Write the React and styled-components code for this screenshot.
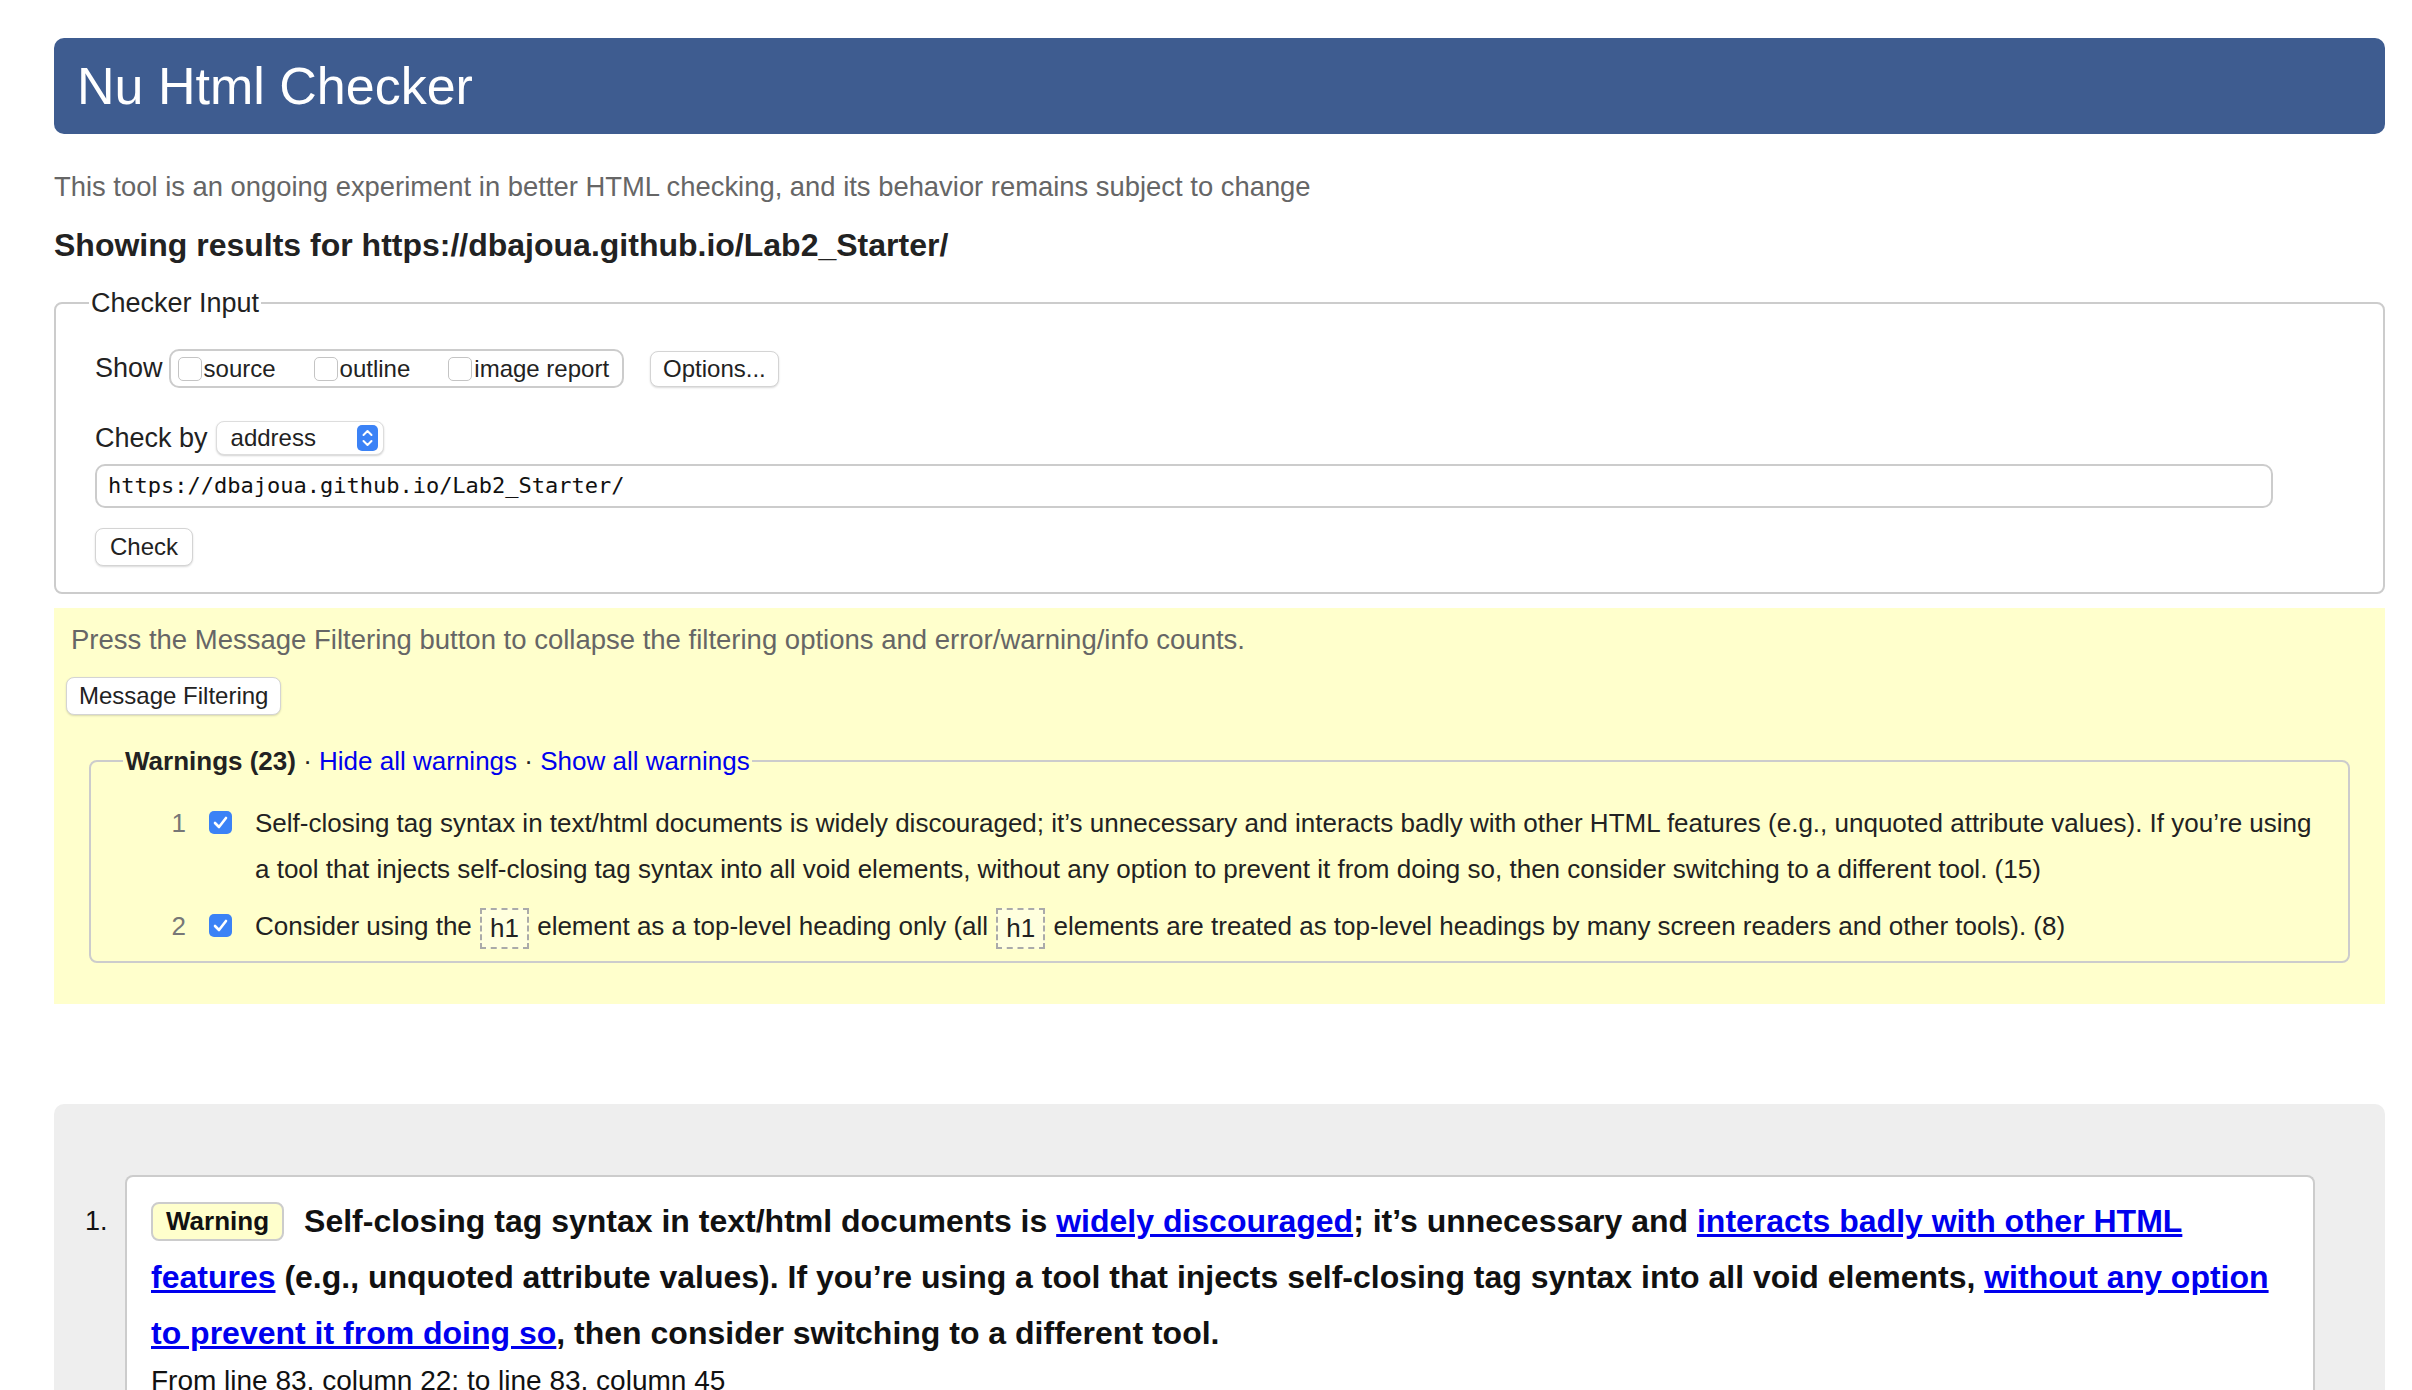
import React from 'react';
import styled, { createGlobalStyle } from 'styled-components';

const GlobalStyle = createGlobalStyle`
  html, body {
    margin: 0;
    padding: 0;
    background: #fff;
    overflow: hidden;
  }
  body {
    font-family: "Liberation Sans", Arial, Helvetica, sans-serif;
    color: #222;
  }
  * {
    box-sizing: border-box;
  }
`;

const Page = styled.div`
  padding: 38px 27px 0 54px;
`;

const Title = styled.h1`
  margin: 0;
  height: 96px;
  padding: 0 23px;
  background: #3e5c90;
  color: #fff;
  border-radius: 10px;
  font-size: 52px;
  font-weight: normal;
  line-height: 96px;
`;

const Intro = styled.p`
  margin: 35px 0 0;
  font-size: 27.4px;
  line-height: 36px;
  color: #666;
`;

const ResultsFor = styled.h2`
  margin: 20px 0 0;
  font-size: 32px;
  line-height: 40px;
  font-weight: bold;
  color: #222;
`;

const Fieldset = styled.fieldset`
  margin: 20px 0 0;
  padding: 0 24px 26px 39px;
  border: 2px solid #ccc;
  border-radius: 8px;
  min-width: 0;
`;

const Legend = styled.legend`
  font-size: 27px;
  line-height: 36px;
  padding: 0 2px;
  margin-left: -6px;
  color: #222;
`;

const Row = styled.div`
  display: flex;
  align-items: center;
  height: ${p => p.h}px;
  margin-top: ${p => p.top}px;
`;

const Label = styled.span`
  font-size: 27px;
  margin-right: ${p => p.gap || 6}px;
`;

const Group = styled.div`
  display: flex;
  align-items: center;
  gap: 38px;
  height: 39px;
  border: 2px solid #ccc;
  border-radius: 10px;
  padding: 0 13px 0 7px;
`;

const Option = styled.label`
  display: flex;
  align-items: center;
  gap: 2px;
  font-size: 24px;
  color: #222;
`;

const Box = styled.span`
  width: 24px;
  height: 24px;
  border: 1px solid #c4c4c4;
  border-radius: 5px;
  background: #fff;
`;

const Button = styled.button`
  height: ${p => p.h || 36}px;
  margin-left: ${p => p.left || 0}px;
  padding: 0 ${p => p.pad || 14}px;
  background: #fff;
  border: 1px solid #d4d4d4;
  border-radius: 8px;
  box-shadow: 0 1px 2px rgba(0, 0, 0, 0.15);
  font-family: "Liberation Sans", Arial, sans-serif;
  font-size: 24px;
  color: #222;
`;

const Select = styled.div`
  display: flex;
  align-items: center;
  justify-content: space-between;
  width: 168px;
  height: 34px;
  padding: 0 5px 0 14px;
  background: #fff;
  border: 1px solid #ddd;
  border-radius: 8px;
  box-shadow: 0 1px 2px rgba(0, 0, 0, 0.18);
  font-size: 24px;
  color: #222;
`;

const UrlInput = styled.div`
  width: 2178px;
  height: 44px;
  margin-top: 9px;
  padding: 0 11px;
  border: 2px solid #ccc;
  border-radius: 10px;
  font-family: "DejaVu Sans Mono", "Liberation Mono", monospace;
  font-size: 22px;
  line-height: 40px;
  color: #111;
`;

const CheckRow = styled.div`
  margin-top: 20px;
`;

const Filters = styled.section`
  margin-top: 14px;
  padding: 14px 17px 41px;
  background: #ffffcc;
`;

const Hint = styled.p`
  margin: 0;
  font-size: 27.5px;
  line-height: 36px;
  color: #666;
`;

const FilterButton = styled(Button)`
  display: block;
  margin: 19px 0 0 -5px;
`;

const WarnSet = styled.fieldset`
  margin: 28px 18px 0;
  padding: 0 28px 12px 35px;
  border: 2px solid #ccc;
  border-radius: 8px;
  min-width: 0;
`;

const WarnLegend = styled.legend`
  font-size: 26px;
  line-height: 36px;
  padding: 0 2px;
  margin-left: -3px;
  color: #222;

  b {
    font-weight: bold;
  }
`;

const A = styled.a`
  color: #0000ee;
  text-decoration: ${p => (p.under ? 'underline' : 'none')};
`;

const WarnList = styled.ol`
  margin: 21px 0 0;
  padding: 0;
  list-style: none;
`;

const WarnRow = styled.li`
  display: flex;
  align-items: flex-start;
  font-size: 26px;
  line-height: 46px;
  color: #222;

  & + & {
    margin-top: 11px;
  }
`;

const WarnNum = styled.span`
  flex-shrink: 0;
  width: 60px;
  text-align: right;
  color: #777;
`;

const Tick = styled.span`
  flex-shrink: 0;
  display: flex;
  align-items: center;
  justify-content: center;
  width: 23px;
  height: 23px;
  margin: 11px 23px 0;
  border-radius: 5px;
  background: #3b82f6;
`;

const WarnText = styled.span`
  flex: 1;
`;

const Code = styled.span`
  display: inline-block;
  vertical-align: middle;
  margin: 0 1px;
  padding: 0 8px;
  line-height: 37px;
  border: 2px dashed #aaa;
  background: rgba(255, 255, 255, 0.35);
`;

const Results = styled.section`
  margin-top: 100px;
  padding: 71px 70px 0 0;
  background: #eeeeee;
  border-radius: 10px 10px 0 0;
`;

const ResultItem = styled.div`
  display: flex;
  align-items: flex-start;
`;

const ResultNum = styled.span`
  flex-shrink: 0;
  width: 71px;
  padding: 28px 0 0 31px;
  font-size: 27px;
  line-height: 36px;
  color: #111;
`;

const Card = styled.div`
  flex: 1;
  background: #fff;
  border: 2px solid #ccc;
  border-bottom: none;
  border-radius: 8px 8px 0 0;
  padding: 16px 28px 60px 24px;
`;

const Message = styled.p`
  margin: 0;
  font-size: 32px;
  line-height: 56px;
  font-weight: bold;
  color: #111;
`;

const Badge = styled.span`
  display: inline-block;
  vertical-align: 2px;
  margin-right: 20px;
  padding: 0 13px;
  background: #ffffcc;
  border: 2px solid #ccc;
  border-radius: 8px;
  font-size: 26px;
  line-height: 35px;
  color: #111;
`;

const Location = styled.p`
  margin: 2px 0 0;
  font-size: 28px;
  line-height: 36px;
  color: #111;
`;

const Extract = styled.pre`
  margin: 14px 0 0;
  font-family: "DejaVu Sans Mono", "Liberation Mono", monospace;
  font-size: 22px;
  line-height: 34px;
  color: #222;
`;

const CheckMark = () => (
  <svg width="15" height="13" viewBox="0 0 15 13">
    <path d="M2 7 L6 11 L13 2" fill="none" stroke="#fff" strokeWidth="2.6" strokeLinecap="round" strokeLinejoin="round" />
  </svg>
);

const SelectArrows = () => (
  <svg width="21" height="26" viewBox="0 0 21 26">
    <rect x="0" y="0" width="21" height="26" rx="5" fill="#3b82f6" />
    <path d="M6.5 10 L10.5 6 L14.5 10" fill="none" stroke="#fff" strokeWidth="2" strokeLinecap="round" strokeLinejoin="round" />
    <path d="M6.5 16 L10.5 20 L14.5 16" fill="none" stroke="#fff" strokeWidth="2" strokeLinecap="round" strokeLinejoin="round" />
  </svg>
);

const showOptions = ['source', 'outline', 'image report'];

export default function App() {
  return (
    <>
      <GlobalStyle />
      <Page>
        <Title>Nu Html Checker</Title>
        <Intro>This tool is an ongoing experiment in better HTML checking, and its behavior remains subject to change</Intro>
        <ResultsFor>Showing results for https://dbajoua.github.io/Lab2_Starter/</ResultsFor>

        <Fieldset>
          <Legend>Checker Input</Legend>
          <Row h={39} top={28}>
            <Label>Show</Label>
            <Group>
              {showOptions.map(name => (
                <Option key={name}>
                  <Box />
                  {name}
                </Option>
              ))}
            </Group>
            <Button left={26} pad={12}>Options...</Button>
          </Row>
          <Row h={34} top={33}>
            <Label gap={8}>Check by</Label>
            <Select>
              address
              <SelectArrows />
            </Select>
          </Row>
          <UrlInput>https://dbajoua.github.io/Lab2_Starter/</UrlInput>
          <CheckRow>
            <Button h={38}>Check</Button>
          </CheckRow>
        </Fieldset>

        <Filters>
          <Hint>Press the Message Filtering button to collapse the filtering options and error/warning/info counts.</Hint>
          <FilterButton h={38} pad={12}>Message Filtering</FilterButton>
          <WarnSet>
            <WarnLegend>
              <b>Warnings (23)</b> · <A href="#">Hide all warnings</A> · <A href="#">Show all warnings</A>
            </WarnLegend>
            <WarnList>
              <WarnRow>
                <WarnNum>1</WarnNum>
                <Tick><CheckMark /></Tick>
                <WarnText>
                  Self-closing tag syntax in text/html documents is widely discouraged; it’s unnecessary and interacts badly with other HTML features (e.g., unquoted attribute values). If you’re using a tool that injects self-closing tag syntax into all void elements, without any option to prevent it from doing so, then consider switching to a different tool. (15)
                </WarnText>
              </WarnRow>
              <WarnRow>
                <WarnNum>2</WarnNum>
                <Tick><CheckMark /></Tick>
                <WarnText>
                  Consider using the <Code>h1</Code> element as a top-level heading only (all <Code>h1</Code> elements are treated as top-level headings by many screen readers and other tools). (8)
                </WarnText>
              </WarnRow>
            </WarnList>
          </WarnSet>
        </Filters>

        <Results>
          <ResultItem>
            <ResultNum>1.</ResultNum>
            <Card>
              <Message>
                <Badge>Warning</Badge>
                Self-closing tag syntax in text/html documents is <A under="1" href="#">widely discouraged</A>; it’s unnecessary and <A under="1" href="#">interacts badly with other HTML features</A> (e.g., unquoted attribute values). If you’re using a tool that injects self-closing tag syntax into all void elements, <A under="1" href="#">without any option to prevent it from doing so</A>, then consider switching to a different tool.
              </Message>
              <Location>From line 83, column 22; to line 83, column 45</Location>
              <Extract>{'ge-credit"> <br/>↩        </'}</Extract>
            </Card>
          </ResultItem>
        </Results>
      </Page>
    </>
  );
}
